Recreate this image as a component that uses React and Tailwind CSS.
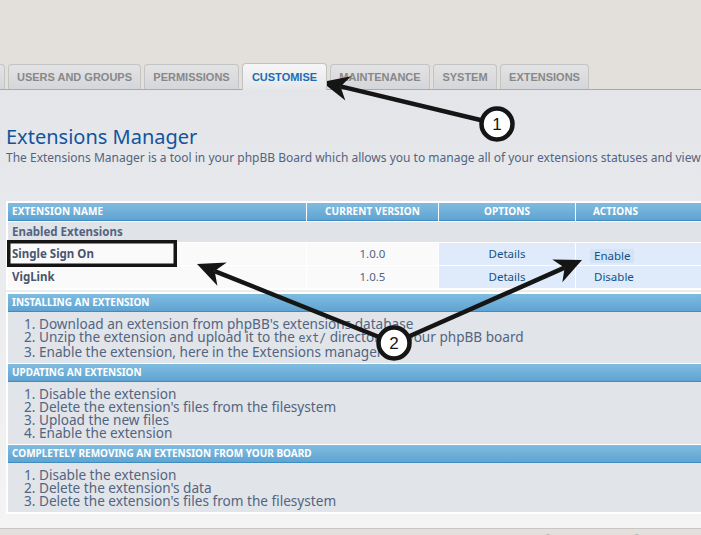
import React from 'react';

const tabs = [
  { label: 'USERS AND GROUPS', w: 'w-[133px]' },
  { label: 'PERMISSIONS', w: 'w-[95px]' },
  { label: 'CUSTOMISE', w: 'w-[85px]', active: true },
  { label: 'MAINTENANCE', w: 'w-[100px]' },
  { label: 'SYSTEM', w: 'w-[64px]' },
  { label: 'EXTENSIONS', w: 'w-[89px]' },
];

const sections = [
  {
    title: 'INSTALLING AN EXTENSION',
    steps: [
      "Download an extension from phpBB's extensions database",
      'UNZIP',
      'Enable the extension, here in the Extensions manager',
    ],
  },
  {
    title: 'UPDATING AN EXTENSION',
    steps: [
      'Disable the extension',
      "Delete the extension's files from the filesystem",
      'Upload the new files',
      'Enable the extension',
    ],
  },
  {
    title: 'COMPLETELY REMOVING AN EXTENSION FROM YOUR BOARD',
    steps: [
      'Disable the extension',
      "Delete the extension's data",
      "Delete the extension's files from the filesystem",
    ],
  },
];

function Arrow({ tip, tail }) {
  const [tx, ty] = tip;
  const [sx, sy] = tail;
  const dx = sx - tx;
  const dy = sy - ty;
  const len = Math.hypot(dx, dy);
  const ux = dx / len;
  const uy = dy / len;
  const px = -uy;
  const py = ux;
  const L = 27;
  const W = 12.5;
  const N = 19;
  const b1 = [tx + ux * L + px * W, ty + uy * L + py * W];
  const b2 = [tx + ux * L - px * W, ty + uy * L - py * W];
  const n = [tx + ux * N, ty + uy * N];
  return (
    <g>
      <line x1={n[0]} y1={n[1]} x2={sx} y2={sy} stroke="#151515" strokeWidth="4.5" />
      <polygon
        points={`${tx},${ty} ${b1[0]},${b1[1]} ${n[0]},${n[1]} ${b2[0]},${b2[1]}`}
        fill="#151515"
      />
    </g>
  );
}

function Badge({ cx, cy, n }) {
  return (
    <g>
      <circle cx={cx} cy={cy} r="15.5" fill="#fff" stroke="#151515" strokeWidth="4.5" />
      <text
        x={cx}
        y={cy + 6}
        textAnchor="middle"
        fontFamily="Liberation Sans, Arial, sans-serif"
        fontSize="17"
        fill="#151515"
      >
        {n}
      </text>
    </g>
  );
}

function HeadCell({ className, children }) {
  return (
    <div
      className={`h-full flex items-center bg-gradient-to-b from-[#80bce0] to-[#5fa4d2] border-b border-[#3f8cc2] text-white font-bold text-[10px] tracking-[0.1px] ${className}`}
    >
      {children}
    </div>
  );
}

export default function App() {
  return (
    <div className="relative w-[701px] h-[535px] overflow-hidden bg-[#e3e0db] font-['Noto_Sans',sans-serif]">
      {/* Onglets */}
      <div className="pt-[62px] h-[89px] flex items-end gap-[3px] font-['Liberation_Sans',Arial,sans-serif]">
        <div className="w-[5px] h-[25px] bg-gradient-to-b from-[#e3e3e5] to-[#d5d6d9] border border-l-0 border-b-0 border-[#c4c4c4] rounded-tr-[4px]" />
        {tabs.map((t) =>
          t.active ? (
            <div
              key={t.label}
              className={`${t.w} h-[27px] -mb-px relative z-10 flex items-center justify-center bg-gradient-to-b from-[#f6f6f7] to-[#e5e7ea] border border-b-0 border-[#c2c2c2] rounded-t-[4px] text-[11px] font-bold text-[#1d6cb4]`}
            >
              {t.label}
            </div>
          ) : (
            <div
              key={t.label}
              className={`${t.w} h-[25px] flex items-center justify-center bg-gradient-to-b from-[#e3e3e5] to-[#d5d6d9] border border-b-0 border-[#c4c4c4] rounded-t-[4px] text-[11px] font-bold text-[#888888]`}
            >
              {t.label}
            </div>
          )
        )}
      </div>

      {/* Panneau principal */}
      <div className="h-[440px] border-t border-b border-[#a9a9a9] border-b-[#c6c6c6] bg-gradient-to-b from-[#e3e5e9] to-[#f4f4f4] px-[6px]">
        <h1 className="mt-[35px] text-[20px] leading-[24px] text-[#12549c] whitespace-nowrap">Extensions Manager</h1>
        <p className="mt-[2px] text-[12px] leading-[14px] text-[#536482] whitespace-nowrap">
          The Extensions Manager is a tool in your phpBB Board which allows you to manage all of your extensions statuses and view information about them.
        </p>

        {/* Tableau */}
        <div className="mt-[36px] w-[760px] bg-white p-[2px] flex flex-col gap-px">
          <div className="flex gap-px h-[18px]">
            <HeadCell className="w-[298px] pl-[4px]">EXTENSION NAME</HeadCell>
            <HeadCell className="w-[131px] justify-center">CURRENT VERSION</HeadCell>
            <HeadCell className="w-[136px] justify-center">OPTIONS</HeadCell>
            <HeadCell className="flex-1 pl-[17px]">ACTIONS</HeadCell>
          </div>
          <div className="h-[20px] bg-[#e0e3e7] flex items-center pl-[4px] text-[11.5px] font-bold text-[#536482]">
            Enabled Extensions
          </div>
          <div className="flex gap-px h-[22px] text-[11.5px]">
            <div className="w-[298px] bg-[#fafafa] flex items-center pl-[4px] font-bold text-[#48566e]">Single Sign On</div>
            <div className="w-[131px] bg-[#fafafa] flex items-center justify-center text-[#536482]">1.0.0</div>
            <div className="w-[136px] bg-[#dfeafa] flex items-center justify-center text-[#105289]">Details</div>
            <div className="flex-1 bg-[#dfeafa] flex items-center pl-[14px] pt-[3px] text-[#105289]">
              <span className="bg-[#d3e2f4] px-[4px] leading-[14px]">Enable</span>
            </div>
          </div>
          <div className="flex gap-px h-[22px] text-[11.5px]">
            <div className="w-[298px] bg-[#fafafa] flex items-center pl-[4px] font-bold text-[#48566e]">VigLink</div>
            <div className="w-[131px] bg-[#fafafa] flex items-center justify-center text-[#536482]">1.0.5</div>
            <div className="w-[136px] bg-[#dfeafa] flex items-center justify-center text-[#105289]">Details</div>
            <div className="flex-1 bg-[#dfeafa] flex items-center pl-[18px] text-[#105289]">Disable</div>
          </div>
        </div>

        {/* Sections d'aide */}
        <div className="mt-[2px] w-[760px] bg-white p-[2px] flex flex-col gap-px">
          {sections.map((s) => (
            <div key={s.title}>
              <div className="h-[18px] flex items-center pl-[4px] bg-gradient-to-b from-[#80bce0] to-[#5fa4d2] border-b border-[#3f8cc2] text-white font-bold text-[10px]">
                {s.title}
              </div>
              <ol className="bg-[#e1e4e8] list-decimal list-inside pl-[16px] pt-[5px] pb-[5px] text-[13.6px] leading-[13px] text-[#536482]">
                {s.steps.map((step) => (
                  <li key={step} className="whitespace-nowrap">
                    {step === 'UNZIP' ? (
                      <>
                        Unzip the extension and upload it to the{' '}
                        <span className="font-['DejaVu_Sans_Mono',monospace] text-[11.5px]">ext/</span> directory of your phpBB board
                      </>
                    ) : (
                      step
                    )}
                  </li>
                ))}
              </ol>
            </div>
          ))}
        </div>
      </div>

      {/* Pied de page */}
      <div className="pl-[455px] pt-[3px] text-[10px] text-[#a5a5a5] whitespace-nowrap">
        Powered by phpBB® Forum Software © phpBB Limited
      </div>

      {/* Annotations */}
      <svg className="absolute inset-0 pointer-events-none" width="701" height="535" viewBox="0 0 701 535">
        <rect x="8.75" y="241.75" width="166.5" height="23.5" fill="none" stroke="#151515" strokeWidth="3.5" />
        <Arrow tip={[322, 82]} tail={[497, 124]} />
        <Arrow tip={[197, 264]} tail={[394, 343]} />
        <Arrow tip={[582, 260]} tail={[394, 343]} />
        <Badge cx={497} cy={124} n="1" />
        <Badge cx={394} cy={343} n="2" />
      </svg>
    </div>
  );
}
